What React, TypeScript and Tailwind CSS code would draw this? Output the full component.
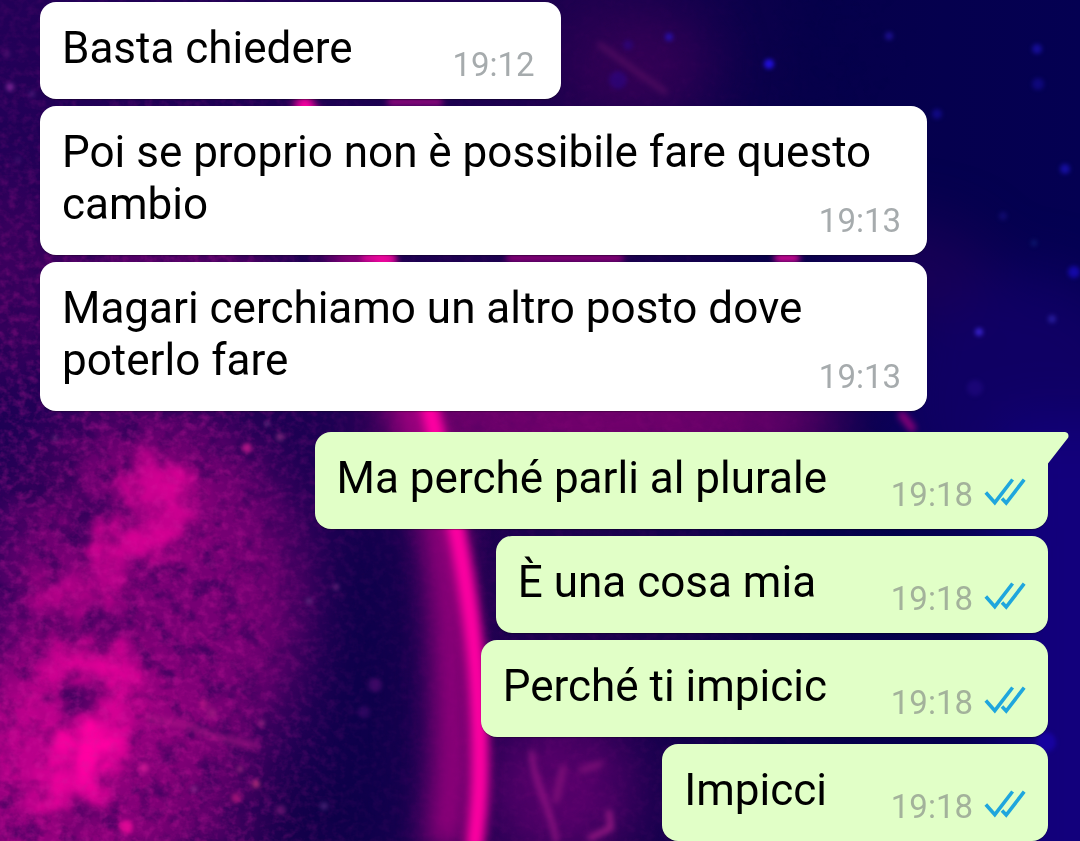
type Message = {
  text: string;
  time: string;
  outgoing?: boolean;
  tail?: boolean;
};

const messages: Message[] = [
  { text: "Basta chiedere", time: "19:12" },
  { text: "Poi se proprio non è possibile fare questo cambio", time: "19:13" },
  { text: "Magari cerchiamo un altro posto dove poterlo fare", time: "19:13" },
  { text: "Ma perché parli al plurale", time: "19:18", outgoing: true, tail: true },
  { text: "È una cosa mia\u00a0", time: "19:18", outgoing: true },
  { text: "Perché ti impicic", time: "19:18", outgoing: true },
  { text: "Impicci", time: "19:18", outgoing: true },
];

// x, y, radius, colour, opacity
const stars: [number, number, number, string, number][] = [
  [769, 64, 5, "#2410e8", 0.9],
  [669, 37, 4, "#2a12c8", 0.7],
  [889, 36, 4, "#2a18b8", 0.6],
  [1037, 49, 5, "#1c12b4", 0.7],
  [1038, 84, 6, "#160c98", 0.6],
  [937, 114, 5, "#160c98", 0.7],
  [1065, 169, 5, "#1c14c0", 0.7],
  [1003, 216, 4, "#24189a", 0.4],
  [1034, 243, 3, "#14308c", 0.5],
  [1074, 272, 6, "#1a0cc8", 0.7],
  [979, 332, 4, "#3a22d0", 0.9],
  [1052, 319, 4, "#2c20a8", 0.8],
  [975, 388, 8, "#2a0c90", 0.4],
  [618, 80, 9, "#2a08a0", 0.4],
  [628, 45, 5, "#2a08a0", 0.4],
  [1046, 742, 10, "#1a04b8", 0.6],
  [10, 87, 4, "#8c2ca0", 0.8],
  [7, 54, 3, "#6a1c80", 0.6],
  [32, 94, 3, "#5c2a8c", 0.6],
  [18, 160, 3, "#4c1a78", 0.6],
  [247, 448, 5, "#cc1a90", 0.8],
  [280, 437, 4, "#a0388c", 0.6],
  [55, 438, 2, "#b070b0", 0.6],
  [267, 424, 2, "#8060a0", 0.7],
  [309, 601, 3, "#6a3a88", 0.7],
  [336, 587, 3, "#84308c", 0.7],
  [375, 685, 7, "#64107c", 0.5],
  [364, 712, 6, "#54107c", 0.4],
  [204, 704, 5, "#c81c88", 0.5],
  [212, 713, 5, "#b02888", 0.5],
  [262, 723, 3, "#a82c88", 0.8],
  [144, 768, 5, "#d81c98", 0.7],
  [240, 769, 3, "#b03088", 0.7],
  [256, 784, 4, "#d03880", 0.7],
  [236, 798, 5, "#c01880", 0.7],
  [281, 810, 5, "#681470", 0.8],
  [324, 806, 4, "#50287c", 0.7],
  [194, 789, 3, "#a03898", 0.7],
  [126, 827, 7, "#ff0aa0", 0.7],
];

function Wallpaper() {
  return (
    <svg
      className="absolute inset-0 size-full"
      viewBox="0 0 1080 841"
      preserveAspectRatio="xMidYMid slice"
      colorInterpolationFilters="sRGB"
      aria-hidden="true"
    >
      <defs>
        <linearGradient id="sky" x1="0" y1="0" x2="1" y2="0">
          <stop offset="0" stopColor="#230058" />
          <stop offset="0.3" stopColor="#1c0052" />
          <stop offset="0.55" stopColor="#1d004e" />
          <stop offset="0.75" stopColor="#06004a" />
          <stop offset="1" stopColor="#040052" />
        </linearGradient>
        <filter id="cloud" x="-30%" y="-30%" width="160%" height="160%">
          <feGaussianBlur stdDeviation="10" result="soft" />
          <feTurbulence type="fractalNoise" baseFrequency="0.045" numOctaves="3" seed="8" result="noise" />
          <feDisplacementMap in="soft" in2="noise" scale="44" xChannelSelector="R" yChannelSelector="G" />
          <feGaussianBlur stdDeviation="2" />
        </filter>
        <filter id="haze" x="-60%" y="-60%" width="220%" height="220%">
          <feGaussianBlur stdDeviation="28" />
        </filter>
        <filter id="glow" x="-50%" y="-20%" width="200%" height="140%">
          <feGaussianBlur stdDeviation="5" />
        </filter>
        <filter id="aura" x="-100%" y="-20%" width="300%" height="140%">
          <feGaussianBlur stdDeviation="15" />
        </filter>
        <filter id="star" x="-100%" y="-100%" width="300%" height="300%">
          <feGaussianBlur stdDeviation="2" />
        </filter>
        <filter id="wisp" x="-20%" y="-20%" width="140%" height="140%">
          <feGaussianBlur stdDeviation="3" />
        </filter>
        <filter id="grain" x="0" y="0" width="100%" height="100%">
          <feTurbulence type="fractalNoise" baseFrequency="0.11 0.13" numOctaves="3" seed="3" />
          <feColorMatrix values="0 0 0 0 0.82  0 0 0 0 0.1  0 0 0 0 0.62  2.4 0 0 0 -1" />
        </filter>
        <filter id="shade" x="0" y="0" width="100%" height="100%">
          <feTurbulence type="fractalNoise" baseFrequency="0.05" numOctaves="4" seed="14" />
          <feColorMatrix values="0 0 0 0 0.13  0 0 0 0 0  0 0 0 0 0.33  0 3 0 0 -1.35" />
        </filter>
        <linearGradient id="fade" x1="0" y1="0" x2="1" y2="0">
          <stop offset="0" stopColor="#fff" />
          <stop offset="0.2" stopColor="#fff" />
          <stop offset="0.34" stopColor="#333" />
          <stop offset="0.6" stopColor="#333" />
          <stop offset="0.85" stopColor="#000" />
        </linearGradient>
        <linearGradient id="dusk" x1="0" y1="0" x2="0" y2="1">
          <stop offset="0" stopColor="#000" stopOpacity="0.7" />
          <stop offset="0.5" stopColor="#000" stopOpacity="0" />
        </linearGradient>
        <mask id="left">
          <rect width="1080" height="841" fill="url(#fade)" />
          <rect width="1080" height="841" fill="url(#dusk)" />
        </mask>
      </defs>

      <rect width="1080" height="841" fill="url(#sky)" />

      <g filter="url(#haze)">
        <ellipse cx="1020" cy="400" rx="130" ry="130" fill="#14006c" opacity="0.7" />
        <rect x="1000" y="420" width="160" height="500" fill="#12007c" />
        <ellipse cx="900" cy="270" rx="90" ry="50" fill="#200058" opacity="0.7" />
        <ellipse cx="150" cy="600" rx="150" ry="190" fill="#8c007c" opacity="0.8" />
        <ellipse cx="60" cy="770" rx="150" ry="130" fill="#a00082" opacity="0.9" />
        <ellipse cx="190" cy="800" rx="80" ry="70" fill="#700070" opacity="0.6" />
        <ellipse cx="10" cy="280" rx="40" ry="100" fill="#4c0062" opacity="0.7" />
        <ellipse cx="610" cy="420" rx="240" ry="45" fill="#8a0074" opacity="0.85" />
        <ellipse cx="640" cy="65" rx="70" ry="50" fill="#3c0058" opacity="0.8" />
        <ellipse cx="560" cy="790" rx="70" ry="70" fill="#5a006c" />
        <ellipse cx="365" cy="700" rx="28" ry="190" fill="#080048" />
        <ellipse cx="305" cy="820" rx="50" ry="50" fill="#100048" />
        <ellipse cx="5" cy="440" rx="40" ry="50" fill="#1c0054" />
      </g>

      <g mask="url(#left)">
        <rect width="1080" height="841" filter="url(#shade)" opacity="0.55" />
      </g>

      <g filter="url(#cloud)" fill="#ff00a2">
        <ellipse cx="158" cy="486" rx="34" ry="26" opacity="0.65" />
        <ellipse cx="178" cy="515" rx="16" ry="30" opacity="0.55" />
        <ellipse cx="144" cy="540" rx="40" ry="18" opacity="0.75" />
        <ellipse cx="98" cy="552" rx="14" ry="18" opacity="0.75" />
        <ellipse cx="110" cy="590" rx="14" ry="26" opacity="0.6" />
        <ellipse cx="60" cy="595" rx="34" ry="16" opacity="0.5" />
        <ellipse cx="88" cy="662" rx="50" ry="20" opacity="0.65" />
        <ellipse cx="90" cy="744" rx="30" ry="36" />
        <ellipse cx="118" cy="692" rx="20" ry="34" opacity="0.6" />
        <ellipse cx="46" cy="690" rx="22" ry="20" opacity="0.4" />
        <ellipse cx="72" cy="790" rx="36" ry="24" opacity="0.8" />
        <ellipse cx="30" cy="745" rx="40" ry="50" opacity="0.35" />
        <ellipse cx="165" cy="264" rx="120" ry="10" opacity="0.35" />
      </g>
      <g filter="url(#cloud)" fill="#240054">
        <ellipse cx="82" cy="522" rx="22" ry="20" opacity="0.75" />
        <ellipse cx="92" cy="624" rx="36" ry="9" opacity="0.8" />
        <ellipse cx="76" cy="702" rx="24" ry="14" />
        <ellipse cx="80" cy="816" rx="20" ry="10" opacity="0.85" />
        <ellipse cx="46" cy="478" rx="36" ry="24" opacity="0.6" />
      </g>

      <g mask="url(#left)">
        <rect width="1080" height="841" filter="url(#grain)" opacity="0.32" />
      </g>

      <path
        d="M340 230 C420 390 448 520 452 650 S450 800 444 850"
        fill="none"
        stroke="#b40088"
        strokeWidth="38"
        opacity="0.85"
        filter="url(#aura)"
      />
      <path
        d="M300 98 C350 180 405 290 431 415 C456 520 474 610 478 700 S478 810 474 850"
        fill="none"
        stroke="#ff00a2"
        strokeWidth="18"
        filter="url(#glow)"
      />

      <g fill="none" strokeLinecap="round" filter="url(#wisp)">
        <path d="M390 102 L440 102" stroke="#b00888" strokeWidth="6" />
        <path d="M365 258 H392 M778 258 H796" stroke="#e00898" strokeWidth="8" />
        <path d="M510 258 H620" stroke="#900078" strokeWidth="8" />
        <path d="M532 752 C532 780 552 810 556 841" stroke="#a01888" strokeWidth="4" />
        <path d="M556 800 L563 768 M582 770 L600 764" stroke="#801078" strokeWidth="6" />
        <path d="M590 838 L611 828 L609 812" stroke="#a41c88" strokeWidth="5" />
        <path d="M148 718 L190 726 L212 736 L256 746" stroke="#b01888" strokeWidth="5" opacity="0.8" />
        <path d="M600 45 L665 92" stroke="#500c60" strokeWidth="5" />
        <path d="M902 415 L912 428" stroke="#860078" strokeWidth="8" />
      </g>
      <g filter="url(#star)">
        {stars.map(([x, y, r, color, opacity], i) => (
          <circle key={i} cx={x} cy={y} r={r} fill={color} opacity={opacity} />
        ))}
      </g>
    </svg>
  );
}

function ReadTicks() {
  return (
    <svg
      className="mt-0.5 h-7 w-[42px]"
      viewBox="0 0 42 28"
      fill="none"
      stroke="#1fa6dd"
      strokeWidth="3.6"
      role="img"
      aria-label="Letto"
    >
      <path d="M1.8 14.5 L10.8 24.6 L28.6 1.5" />
      <path d="M18 20.6 L22.2 25 L40.2 1.7" />
    </svg>
  );
}

function Bubble({ text, time, outgoing, tail }: Message) {
  return (
    <li
      className={`relative grid max-w-[88%] rounded-2xl pt-5 pb-[25px] pl-[22px] shadow-[0_1px_1px_rgba(0,0,0,0.3)] ${
        outgoing ? "self-end bg-[#e1ffc7] pr-[22px]" : "self-start bg-white pr-[26px]"
      } ${tail ? "mt-[14px] rounded-tr-none" : ""}`}
    >
      <p className="[grid-area:1/1] text-[44px] leading-[52px] text-black">
        {text}
        <span className={`inline-block h-px ${outgoing ? "w-[199px]" : "w-[182px]"}`} />
      </p>
      <div className="[grid-area:1/1] -mb-[10px] flex items-start gap-[11px] self-end justify-self-end">
        <time
          className={`text-[33px] leading-[38px] ${outgoing ? "text-[#a3b29b]" : "text-[#a6abad]"}`}
        >
          {time}
        </time>
        {outgoing && <ReadTicks />}
      </div>
      {tail && (
        <svg className="absolute top-0 left-full h-8 w-[21px]" viewBox="0 0 21 32" aria-hidden="true">
          <path d="M-1 0 H17 Q20.5 0.5 20.5 4 Q20.5 5.5 19.5 6.5 L0 31.5 H-1 Z" fill="#e1ffc7" />
        </svg>
      )}
    </li>
  );
}

export default function App() {
  return (
    <main className="relative isolate min-h-screen overflow-hidden bg-[#140050] font-[Roboto,sans-serif]">
      <Wallpaper />
      <ul className="relative flex flex-col gap-[7px] pt-0.5 pr-8 pl-10">
        {messages.map((message, i) => (
          <Bubble key={i} {...message} />
        ))}
      </ul>
    </main>
  );
}
